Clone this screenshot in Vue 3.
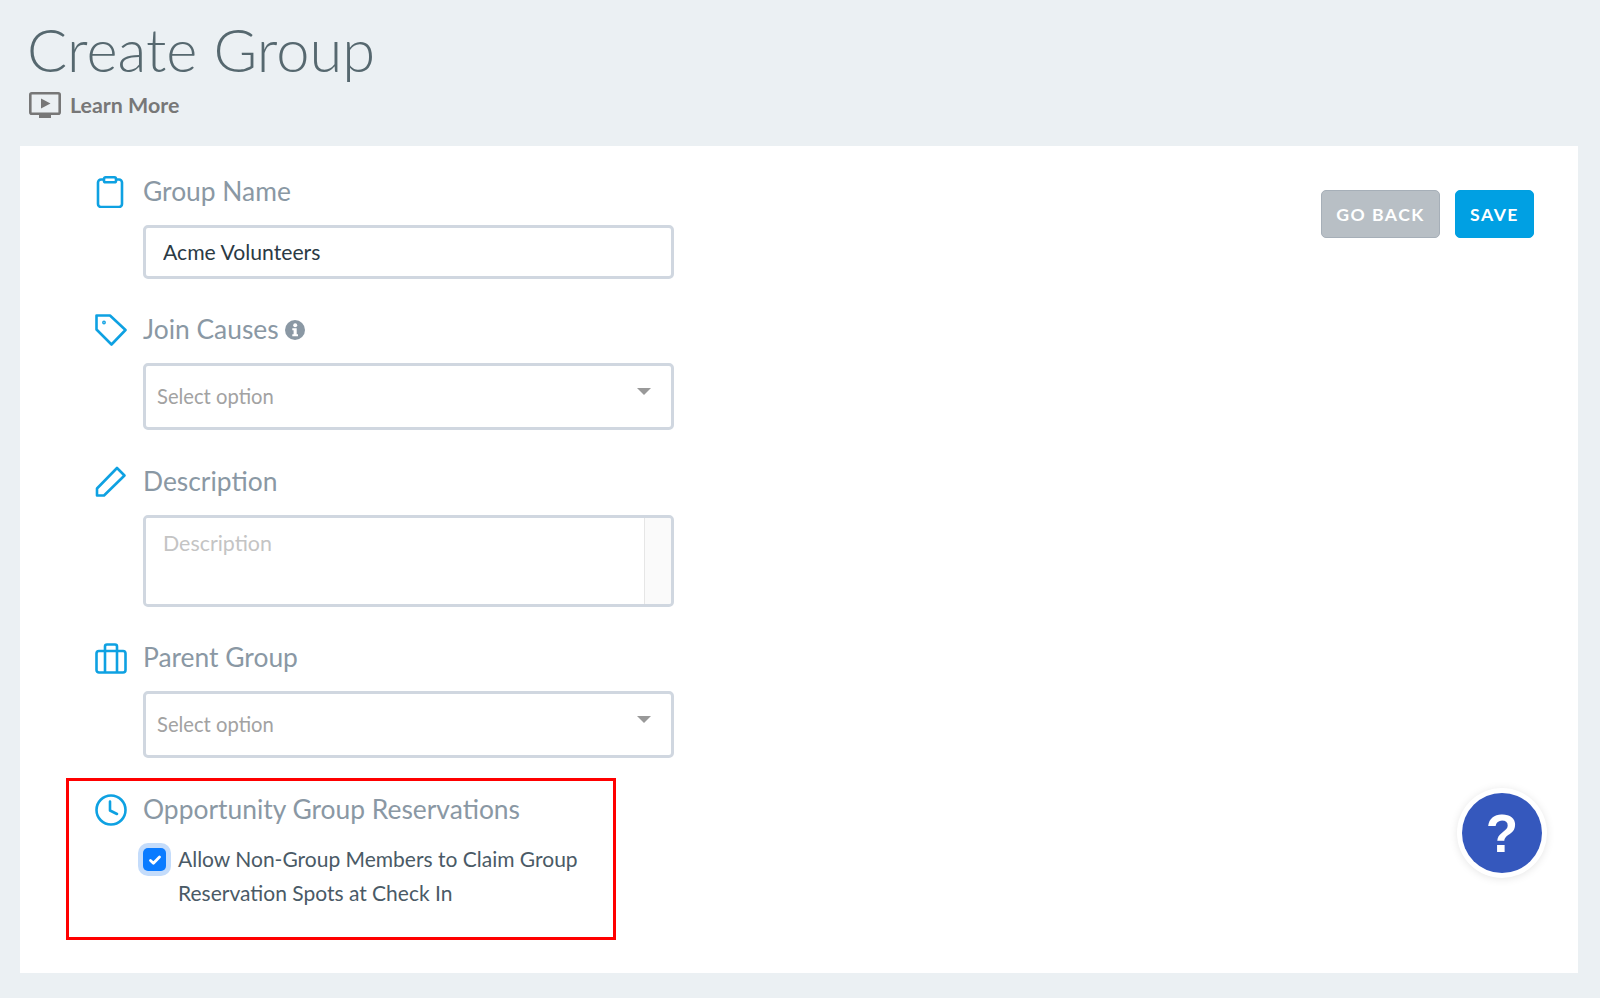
<template>
  <div class="page">
    <header class="page-head">
      <h1 class="title">Create Group</h1>
      <a class="learn" href="#" @click.prevent>
        <svg class="learn-icon" viewBox="0 0 32 26" fill="none">
          <rect x="1.3" y="1.3" width="29.4" height="20.4" rx="1.5" stroke="#777" stroke-width="2.6" />
          <path d="M12 6.5 21.5 11.5 12 16.5Z" fill="#777" />
          <rect x="10" y="23" width="12" height="3" fill="#777" />
        </svg>
        Learn More
      </a>
    </header>

    <main class="card">
      <form class="form" @submit.prevent>
        <div class="field field-first">
          <div class="field-head">
            <svg class="field-icon" viewBox="0 0 32 32" fill="none" stroke="#0ea1e2" stroke-width="2.6">
              <rect x="3" y="3.5" width="24" height="27.5" rx="3" />
              <rect x="9" y="1.3" width="12" height="5" rx="1.6" fill="#fff" />
            </svg>
            <label class="field-label" for="name">Group Name</label>
          </div>
          <input id="name" v-model="groupName" class="control text-input" />
        </div>

        <div class="field">
          <div class="field-head">
            <svg class="field-icon" viewBox="0 0 32 32" fill="none" stroke="#0ea1e2" stroke-width="2.6" stroke-linejoin="round">
              <path d="M1.5 1.5H15L30.5 16 16.5 30.5 1.5 15.5Z" />
              <circle cx="9" cy="8.5" r=".6" fill="#0ea1e2" />
            </svg>
            <span class="field-label">Join Causes</span>
            <svg class="info" viewBox="0 0 20 20">
              <circle cx="10" cy="10" r="10" fill="#8a98a4" />
              <circle cx="10.2" cy="5.2" r="2" fill="#fff" />
              <path d="M7.3 8.3h4.4v6h1.3v2H7.3v-2h1.3v-4H7.3Z" fill="#fff" />
            </svg>
          </div>
          <div class="control select">
            <span>Select option</span>
            <i class="caret"></i>
          </div>
        </div>

        <div class="field field-tight">
          <div class="field-head">
            <svg class="field-icon" viewBox="0 0 32 32" fill="none" stroke="#0ea1e2" stroke-width="2.6" stroke-linejoin="round">
              <path d="M2 22.5 22 2 29.5 9.5 9 29.5H2Z" />
            </svg>
            <label class="field-label" for="description">Description</label>
          </div>
          <div class="control area">
            <textarea id="description" placeholder="Description"></textarea>
            <div class="gutter"></div>
          </div>
        </div>

        <div class="field">
          <div class="field-head">
            <svg class="field-icon" viewBox="0 0 32 32" fill="none" stroke="#0ea1e2" stroke-width="2.6" stroke-linejoin="round">
              <rect x="1.5" y="9" width="29" height="21.5" rx="2.5" />
              <path d="M10 9V4.5A2 2 0 0 1 12 2.5H20A2 2 0 0 1 22 4.5V9M10 9V30.5M22 9V30.5" />
            </svg>
            <span class="field-label">Parent Group</span>
          </div>
          <div class="control select">
            <span>Select option</span>
            <i class="caret"></i>
          </div>
        </div>

        <section class="highlight">
          <div class="field-head">
            <svg class="field-icon" viewBox="0 0 32 32" fill="none" stroke="#0ea1e2" stroke-width="2.6" stroke-linecap="round" stroke-linejoin="round">
              <circle cx="16" cy="16" r="14.5" />
              <path d="M15 7.5V16.5L22 20" />
            </svg>
            <span class="field-label">Opportunity Group Reservations</span>
          </div>
          <label class="check-row">
            <span class="check">
              <svg viewBox="0 0 14 12" fill="none" stroke="#fff" stroke-width="2.8" stroke-linecap="round" stroke-linejoin="round">
                <path d="M2.5 6.5 5.4 9.2 11.5 3" />
              </svg>
            </span>
            <span class="check-text">Allow Non-Group Members to Claim Group Reservation Spots at Check In</span>
          </label>
        </section>
      </form>

      <div class="actions">
        <button type="button" class="btn btn-back">GO BACK</button>
        <button type="button" class="btn btn-save">SAVE</button>
      </div>

      <button type="button" class="help">?</button>
    </main>
  </div>
</template>

<script setup>
import { ref } from 'vue'

const groupName = ref('Acme Volunteers')
</script>

<style>
html,
body {
  margin: 0;
  background: #ebf0f3;
}
</style>

<style scoped>
.page {
  height: 998px;
  overflow: hidden;
  box-sizing: border-box;
  background: #ebf0f3;
  font-family: Lato, "Liberation Sans", sans-serif;
}

.page-head {
  height: 146px;
  box-sizing: border-box;
  padding: 12px 0 0 29px;
}

.title {
  margin: 0 0 0 -2px;
  font-size: 59.6px;
  line-height: 74px;
  font-weight: 300;
  color: #56686f;
}

.learn {
  display: flex;
  align-items: center;
  gap: 9px;
  margin-top: 6px;
  font-size: 21.4px;
  font-weight: 700;
  line-height: 26px;
  color: #777;
  text-decoration: none;
}

.learn-icon {
  width: 32px;
  height: 26px;
}

.card {
  position: relative;
  display: flex;
  justify-content: space-between;
  align-items: flex-start;
  height: 827px;
  box-sizing: border-box;
  margin: 0 22px 0 20px;
  padding: 29px 44px 0 75px;
  background: #fff;
}

.form {
  width: 579px;
}

.field {
  margin-bottom: 35px;
}

.field-first {
  margin-bottom: 34px;
}

.field-tight {
  margin-bottom: 34px;
}

.field-head {
  display: flex;
  align-items: center;
  height: 34px;
  margin-bottom: 16px;
}

.field-icon {
  width: 32px;
  height: 32px;
  margin-right: 16px;
  flex: none;
}

.field-label {
  padding-bottom: 2px;
  font-size: 26.4px;
  line-height: 34px;
  color: #8a98a4;
}

.info {
  width: 20px;
  height: 20px;
  margin-left: 6px;
}

.control {
  width: 531px;
  margin-left: 48px;
  box-sizing: border-box;
  border: 3px solid #d0d7e0;
  border-radius: 5px;
  background: #fff;
}

.text-input {
  display: block;
  height: 54px;
  padding: 0 17px 1px;
  font: 21.2px Lato, "Liberation Sans", sans-serif;
  color: #2b3a44;
  outline: none;
}

.select {
  display: flex;
  align-items: center;
  justify-content: space-between;
  height: 67px;
  padding: 0 20px 2px 11px;
  font-size: 20.2px;
  color: #a2a2a2;
}

.caret {
  width: 0;
  height: 0;
  margin: 0 0 8px;
  border-left: 7px solid transparent;
  border-right: 7px solid transparent;
  border-top: 7px solid #999;
}

.area {
  display: flex;
  height: 92px;
  overflow: hidden;
}

.area textarea {
  flex: 1;
  min-width: 0;
  box-sizing: border-box;
  padding: 12px 17px;
  border: 0;
  outline: none;
  resize: none;
  font: 21.4px Lato, "Liberation Sans", sans-serif;
  color: #2b3a44;
}

.area textarea::placeholder {
  color: #c4c4c4;
}

.gutter {
  width: 26px;
  border-left: 1px solid #e6e6e6;
  background: #fafafa;
}

.highlight {
  box-sizing: border-box;
  width: 550px;
  height: 162px;
  margin: -15px 0 0 -29px;
  padding: 12px 0 0 26px;
  border: 3px solid #f00;
}

.highlight .field-head {
  margin-bottom: 15px;
}

.check-row {
  display: flex;
  align-items: flex-start;
  margin-left: 48px;
  font-size: 21px;
  line-height: 33.5px;
  color: #4a5a66;
}

.check {
  display: flex;
  align-items: center;
  justify-content: center;
  flex: none;
  width: 23px;
  height: 23px;
  margin: 6px 12px 0 0;
  border-radius: 5px;
  background: #0a7bff;
  box-shadow: 0 0 0 5px #c4dcfb;
}

.check svg {
  width: 14px;
  height: 12px;
}

.check-text {
  width: 420px;
}

.actions {
  display: flex;
  gap: 15px;
  margin-top: 15px;
}

.btn {
  height: 48px;
  box-sizing: border-box;
  border-radius: 5px;
  font: 700 17.6px Lato, "Liberation Sans", sans-serif;
  letter-spacing: 1.5px;
  color: #fff;
}

.btn-back {
  width: 119px;
  border: 1px solid #a6afb8;
  background: #b8bfc5;
}

.btn-save {
  width: 79px;
  border: 1px solid #009fe0;
  background: #00a0e3;
}

.help {
  position: absolute;
  right: 36px;
  top: 647px;
  width: 80px;
  height: 80px;
  padding: 0;
  border: 0;
  border-radius: 50%;
  background: #3558bd;
  box-shadow: 0 0 0 5px #fff, 0 1px 8px 5px rgba(0, 0, 0, 0.1);
  font: 700 53px "Liberation Sans", sans-serif;
  color: #fff;
}
</style>
